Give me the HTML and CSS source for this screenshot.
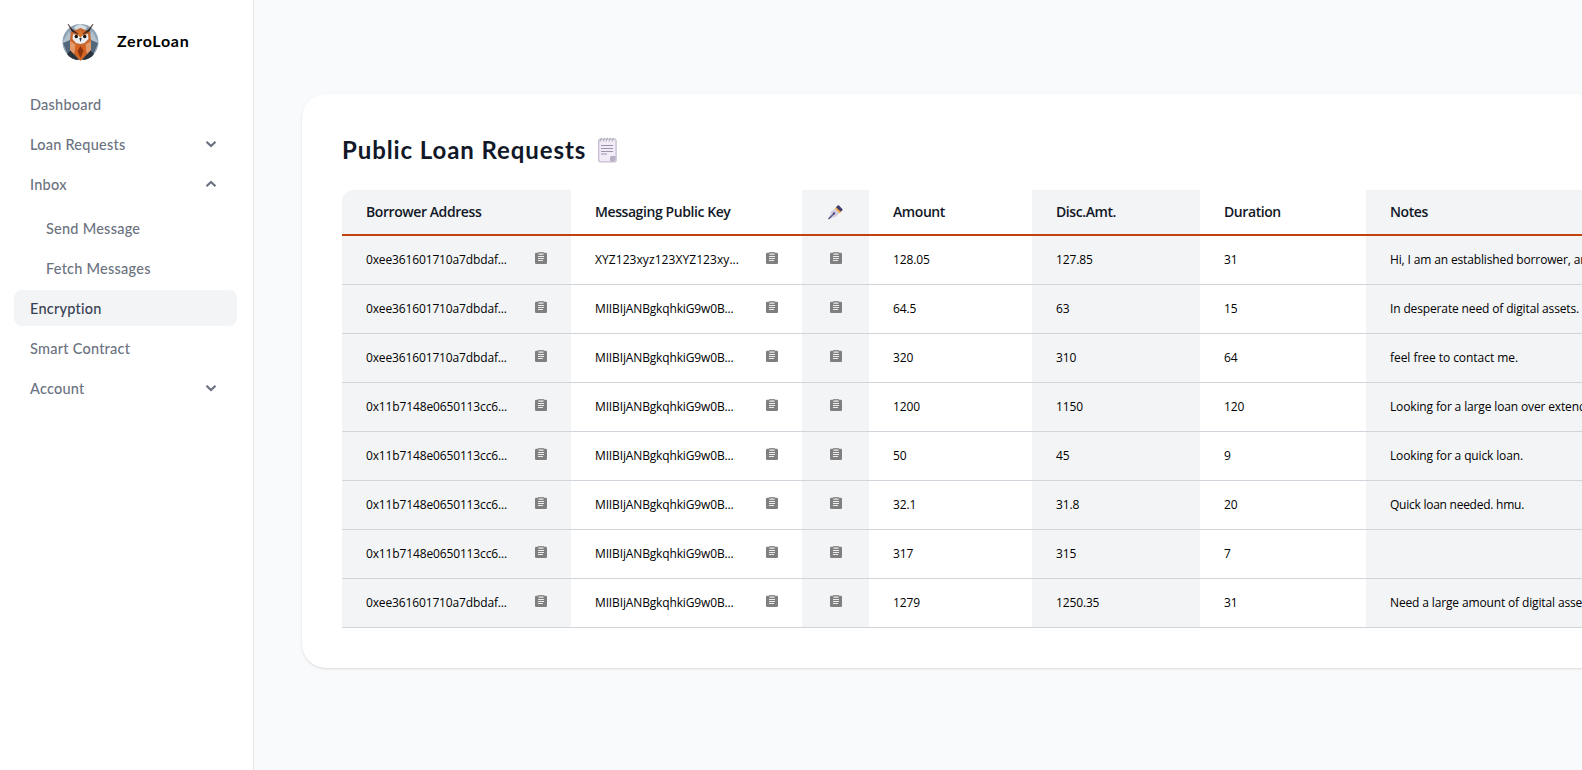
FILE: index.html
```
<!DOCTYPE html>
<html lang="en">
<head>
<meta charset="utf-8">
<title>ZeroLoan</title>
<link rel="stylesheet" href="styles.css">
</head>
<body>
<svg class="defs" aria-hidden="true">
  <symbol id="clip" viewBox="0 0 12 12">
    <rect x="0" y="0.800" width="12" height="11.200" rx="1.200" fill="#7f7f7f"/>
    <rect x="3" y="0" width="6" height="1.600" rx="0.600" fill="#8f8f8f"/>
    <rect x="3.500" y="1.500" width="5" height="1.300" fill="#e6e6e6"/>
    <path d="M3 4.500h6M3 6.500h6M3 8.500h5" stroke="#ececec" stroke-width="1"/>
  </symbol>
  <symbol id="chev" viewBox="0 0 12 8">
    <path d="M1.500 1.700 6 6l4.500-4.300" fill="none" stroke="#6b7280" stroke-width="2.200"/>
  </symbol>
</svg>
<div class="app">
  <aside class="sidebar">
    <div class="brand">
      <svg class="logo" viewBox="0 0 37 38">
        <circle cx="18.500" cy="19" r="18" fill="#8fa3b5"/>
        <path d="M1 19 7 8l5 11-4 10zM36 19 30 8l-5 11 4 10z" fill="#b3c1cc"/>
        <path d="M1 20l7-3 3 12-5 3zM36 20l-7-3-3 12 5 3z" fill="#53677b"/>
        <path d="M5 31l5-5 7 11c-5 0-9-2-12-6zM32 31l-5-5-7 11c5 0 9-2 12-6z" fill="#29323d"/>
        <path d="M12 4 18 1l7 3-3 5h-7z" fill="#d5dde3"/>
        <path d="M9 9 18.500 5 28 9l1 8 0 10-10.500 11L8 27V17z" fill="#c9672c"/>
        <path d="M8 18l6 4-2 9-4-4zM29 18l-6 4 2 9 4-4z" fill="#e29a6c"/>
        <path d="M11 11l7.500 2L26 11l.5 5-4 4-4 1L14 20l-3.500-4z" fill="#e9edf0"/>
        <path d="M18.500 7l3 4-3 4-3-4z" fill="#d7752e"/>
        <path d="M13 22l5.500 2 5.500-2-1 8-4.500 7-4.500-7z" fill="#d8621d"/>
        <path d="M18.500 23l3 5-3 7-3-7z" fill="#8a3512"/>
        <path d="M6 1l4 5 6 5-6-2.500zM31 1l-4 5-6 5 6-2.500z" fill="#39251f" stroke="#39251f" stroke-width=".5"/>
        <circle cx="14.300" cy="13.500" r="1.700" fill="#15110f"/><circle cx="22.700" cy="13.500" r="1.700" fill="#15110f"/>
        <path d="M17.300 15h2.400l-1.200 4z" fill="#26303b"/>
      </svg>
      <span class="brand-name">ZeroLoan</span>
    </div>
    <nav class="nav">
      <a class="item">Dashboard</a>
      <a class="item">Loan Requests<svg class="chev"><use href="#chev"/></svg></a>
      <a class="item">Inbox<svg class="chev up"><use href="#chev"/></svg></a>
      <div class="sub">
        <a class="item">Send Message</a>
        <a class="item">Fetch Messages</a>
      </div>
      <a class="item active">Encryption</a>
      <a class="item">Smart Contract</a>
      <a class="item">Account<svg class="chev"><use href="#chev"/></svg></a>
    </nav>
  </aside>
  <main class="main">
    <section class="card">
      <h1 class="title">Public Loan Requests
        <svg class="note" viewBox="0 0 19 26">
          <rect x="0.700" y="2.200" width="17.400" height="22.600" rx="1.600" fill="#f1ebf8" stroke="#c5bcd0" stroke-width="1.300"/>
          <path d="M2 4.500 3.500.8M5 4.500 6.500.8M8 4.500 9.500.8M11 4.500 12.500.8M14 4.500 15.500.8" stroke="#aaa5ae" stroke-width="1"/>
          <path d="M3 8.500h12M3 11.500h12M3 14.500h12M3 17h6" stroke="#9c93ad" stroke-width="1"/>
          <path d="M12 24.200v-3.700q0-1.500 1.500-1.500h4v3.700l-1.500 1.500z" fill="#b8afc4"/>
        </svg>
      </h1>
      <table class="loans">
        <colgroup><col class="c-addr"><col class="c-key"><col class="c-sign"><col class="c-amt"><col class="c-disc"><col class="c-dur"><col class="c-notes"></colgroup>
        <thead><tr>
          <th>Borrower Address</th><th>Messaging Public Key</th>
          <th class="center"><svg class="pen" viewBox="0 0 15 15">
            <path d="M0.300 14.200 3.300 6 7.400 3.500l4 4L8.800 11.200z" fill="#d3cfdf"/>
            <path d="M.5 14 6 8.600" stroke="#50477a" stroke-width="1.200"/><circle cx="6" cy="8.400" r="1.200" fill="#50477a"/>
            <path d="M7 3.600 8.300 2l5 5-1.800 1.200z" fill="#f3ac3b"/>
            <path d="M8 2.200 9.600.5q.7-.6 1.400 0l3.300 3.400q.6.700 0 1.400l-1.600 1.500z" fill="#443b70"/>
          </svg></th>
          <th>Amount</th><th>Disc.Amt.</th><th>Duration</th><th>Notes</th>
        </tr></thead>
        <tbody>
          <tr><td><div class="copy"><span>0xee361601710a7dbdaf...</span><svg class="clip"><use href="#clip"/></svg></div></td><td><div class="copy"><span class="wide">XYZ123xyz123XYZ123xy...</span><svg class="clip"><use href="#clip"/></svg></div></td><td class="center"><svg class="clip"><use href="#clip"/></svg></td><td>128.05</td><td>127.85</td><td>31</td><td>Hi, I am an established borrower, and</td></tr>
          <tr><td><div class="copy"><span>0xee361601710a7dbdaf...</span><svg class="clip"><use href="#clip"/></svg></div></td><td><div class="copy"><span>MIIBIjANBgkqhkiG9w0B...</span><svg class="clip"><use href="#clip"/></svg></div></td><td class="center"><svg class="clip"><use href="#clip"/></svg></td><td>64.5</td><td>63</td><td>15</td><td>In desperate need of digital assets.</td></tr>
          <tr><td><div class="copy"><span>0xee361601710a7dbdaf...</span><svg class="clip"><use href="#clip"/></svg></div></td><td><div class="copy"><span>MIIBIjANBgkqhkiG9w0B...</span><svg class="clip"><use href="#clip"/></svg></div></td><td class="center"><svg class="clip"><use href="#clip"/></svg></td><td>320</td><td>310</td><td>64</td><td class="loose">feel free to contact me.</td></tr>
          <tr><td><div class="copy"><span>0x11b7148e0650113cc6...</span><svg class="clip"><use href="#clip"/></svg></div></td><td><div class="copy"><span>MIIBIjANBgkqhkiG9w0B...</span><svg class="clip"><use href="#clip"/></svg></div></td><td class="center"><svg class="clip"><use href="#clip"/></svg></td><td>1200</td><td>1150</td><td>120</td><td>Looking for a large loan over extended</td></tr>
          <tr><td><div class="copy"><span>0x11b7148e0650113cc6...</span><svg class="clip"><use href="#clip"/></svg></div></td><td><div class="copy"><span>MIIBIjANBgkqhkiG9w0B...</span><svg class="clip"><use href="#clip"/></svg></div></td><td class="center"><svg class="clip"><use href="#clip"/></svg></td><td>50</td><td>45</td><td>9</td><td>Looking for a quick loan.</td></tr>
          <tr><td><div class="copy"><span>0x11b7148e0650113cc6...</span><svg class="clip"><use href="#clip"/></svg></div></td><td><div class="copy"><span>MIIBIjANBgkqhkiG9w0B...</span><svg class="clip"><use href="#clip"/></svg></div></td><td class="center"><svg class="clip"><use href="#clip"/></svg></td><td>32.1</td><td>31.8</td><td>20</td><td class="tight">Quick loan needed. hmu.</td></tr>
          <tr><td><div class="copy"><span>0x11b7148e0650113cc6...</span><svg class="clip"><use href="#clip"/></svg></div></td><td><div class="copy"><span>MIIBIjANBgkqhkiG9w0B...</span><svg class="clip"><use href="#clip"/></svg></div></td><td class="center"><svg class="clip"><use href="#clip"/></svg></td><td>317</td><td>315</td><td>7</td><td></td></tr>
          <tr><td><div class="copy"><span>0xee361601710a7dbdaf...</span><svg class="clip"><use href="#clip"/></svg></div></td><td><div class="copy"><span>MIIBIjANBgkqhkiG9w0B...</span><svg class="clip"><use href="#clip"/></svg></div></td><td class="center"><svg class="clip"><use href="#clip"/></svg></td><td>1279</td><td>1250.35</td><td>31</td><td>Need a large amount of digital assets</td></tr>
        </tbody>
      </table>
    </section>
  </main>
</div>
</body>
</html>
```
FILE: styles.css
```
* { box-sizing: border-box; }
body { margin: 0; background: #f9fafb; overflow: hidden; font-variant-ligatures: none; }
.defs { display: none; }
.app { display: flex; height: 770px; overflow: hidden; }

.sidebar {
  flex: none;
  width: 254px;
  padding: 22px 16px 0 14px;
  background: #fff;
  border-right: 1px solid #e5e7eb;
  font-family: Lato, sans-serif;
}
.brand { display: flex; align-items: center; height: 40px; padding-left: 48px; gap: 18px; }
.logo { width: 37px; height: 38px; }
.brand-name { padding-bottom: 3px; font-size: 16px; font-weight: 700; letter-spacing: .7px; color: #000; }
.nav { display: flex; flex-direction: column; gap: 4px; margin-top: 24px; }
.item {
  display: flex;
  align-items: center;
  justify-content: space-between;
  height: 36px;
  padding: 0 20px 0 16px;
  border-radius: 8px;
  font-size: 14.5px;
  font-weight: 500;
  letter-spacing: .24px;
  color: #6b7280;
}
.active { background: #f3f4f6; color: #374151; }
.sub { display: flex; flex-direction: column; gap: 4px; padding: 4px 0 0 16px; }
.chev { width: 12px; height: 8px; }
.up { transform: rotate(180deg); }

.main { flex: 1; min-width: 0; padding: 94px 0 0 48px; }
.card {
  width: 1440px;
  height: 574px;
  padding: 40px;
  background: #fff;
  border-radius: 24px;
  box-shadow: 0 1px 3px rgba(0, 0, 0, .1), 0 1px 2px -1px rgba(0, 0, 0, .1);
}
.title {
  display: flex;
  align-items: center;
  gap: 12px;
  height: 32px;
  margin: 0 0 24px;
  padding-bottom: 1px;
  font: 700 24px/31px Lato, sans-serif;
  letter-spacing: .91px;
  color: #111827;
}
.note { width: 19px; height: 26px; }

.loans {
  width: 1360px;
  table-layout: fixed;
  border-collapse: separate;
  border-spacing: 0;
  font-family: "Open Sans", "Noto Sans", sans-serif;
}
.c-addr { width: 229px; }
.c-key { width: 231px; }
.c-sign { width: 67px; }
.c-amt { width: 163px; }
.c-disc { width: 168px; }
.c-dur { width: 166px; }
th, td { padding: 0 24px 2px; text-align: left; white-space: nowrap; }
th {
  height: 46px;
  border-bottom: 2px solid #c2410c;
  font-size: 14px;
  font-weight: 600;
  letter-spacing: -.42px;
  color: #111827;
}
td {
  height: 49px;
  border-bottom: 1px solid #d1d5db;
  font-size: 12px;
  letter-spacing: -.14px;
  color: #000;
}
th:nth-child(odd), td:nth-child(odd) { background: #f3f4f6; }
th:first-child { border-top-left-radius: 12px; }
.center { padding: 0 0 2px; text-align: center; }
.copy { display: flex; align-items: center; justify-content: space-between; }
.wide { letter-spacing: .07px; }
.tight { letter-spacing: -.25px; }
.loose { letter-spacing: -.05px; }
.clip { display: inline-block; width: 12px; height: 12px; position: relative; top: -1px; }
.center .clip { vertical-align: middle; top: -2px; }
.pen { width: 15px; height: 15px; vertical-align: middle; }
```
